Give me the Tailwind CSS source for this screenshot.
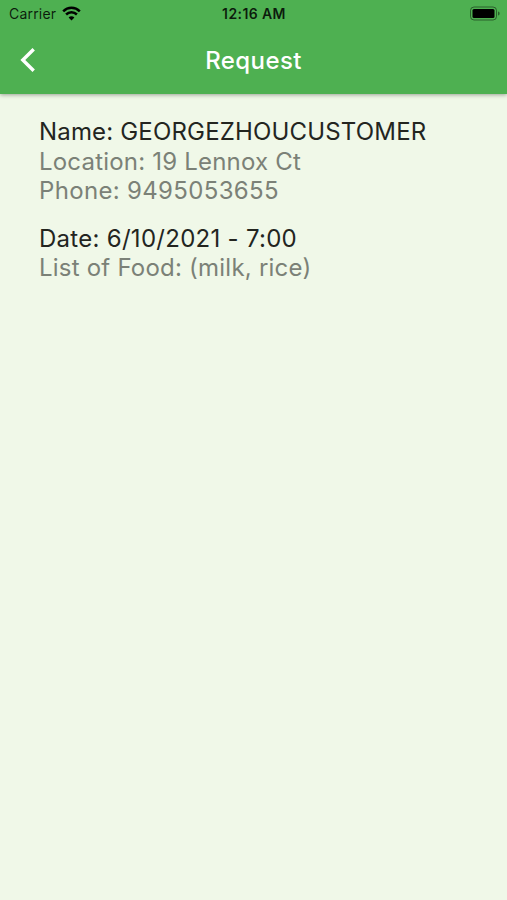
<!DOCTYPE html>
<html lang="en">
<head>
  <meta charset="UTF-8">
  <meta name="viewport" content="width=device-width, initial-scale=1.0">
  <title>Request</title>
  <script src="https://cdn.jsdelivr.net/npm/@tailwindcss/browser@4"></script>
</head>
<body class="bg-[#f0f8e8] font-['Inter',sans-serif] min-h-screen">

  <!-- Header -->
  <header class="bg-[#4eb051] h-[94px] shadow-[0_1px_4px_rgba(0,0,0,0.35)]">
    <!-- Status bar -->
    <div class="grid grid-cols-[1fr_auto_1fr] items-center h-[27px] pl-[9px] pr-[6px] text-black/85">
      <div class="flex items-center gap-[6px]">
        <span class="text-[14px] tracking-[0.2px]">Carrier</span>
        <svg class="w-[19px] h-[15px] -mt-px" viewBox="0 0 19 15" fill="none" stroke="black" stroke-width="2.5">
          <path d="M1.2 5.3C5.8 0.7 13.2 0.7 17.8 5.3" />
          <path d="M4.1 8.5C7.1 5.5 11.9 5.5 14.9 8.5" />
          <path d="M9.5 14.4L6.6 11.4C8.2 9.9 10.8 9.9 12.4 11.4Z" fill="black" stroke="none" />
        </svg>
      </div>
      <span class="-ml-[2px] text-center text-[14px] font-semibold tracking-[0.4px] whitespace-nowrap">12:16 AM</span>
      <svg class="w-[32px] h-[15px] justify-self-end" viewBox="0 0 32 15">
        <rect x="1.5" y="1" width="26" height="13" rx="3.5" fill="none" stroke="black" stroke-opacity="0.45" />
        <rect x="3.5" y="3" width="22" height="9" rx="1.5" fill="black" />
        <path d="M29 5.5C31.2 6 31.2 9 29 9.5Z" fill="black" fill-opacity="0.45" />
      </svg>
    </div>
    <!-- Title bar -->
    <div class="grid grid-cols-3 items-center h-[66px] px-5">
      <svg class="w-4 h-6" viewBox="0 0 16 24" fill="none" stroke="white" stroke-width="3.4">
        <path d="M13.7 1.2L2.8 12L13.7 22.8" />
      </svg>
      <h1 class="pt-px text-center text-[24px] font-medium text-white tracking-[0.4px]">Request</h1>
    </div>
  </header>

  <!-- Request details -->
  <main class="pl-[39px] pt-[23px] text-[24px] leading-[29.4px] whitespace-nowrap text-[#7b8177]">
    <section>
      <p class="text-[#23251f] tracking-[0.17px]">Name: GEORGEZHOUCUSTOMER</p>
      <p class="pt-[0.5px] -mb-[0.5px] tracking-[0.2px]">Location: 19 Lennox Ct</p>
      <p class="tracking-[0.33px]">Phone: 9495053655</p>
    </section>
    <section class="mt-[18.5px]">
      <p class="text-[#23251f] tracking-[0.28px]">Date: 6/10/2021 - 7:00</p>
      <p class="tracking-[0.22px]">List of Food: (milk, rice)</p>
    </section>
  </main>

</body>
</html>
